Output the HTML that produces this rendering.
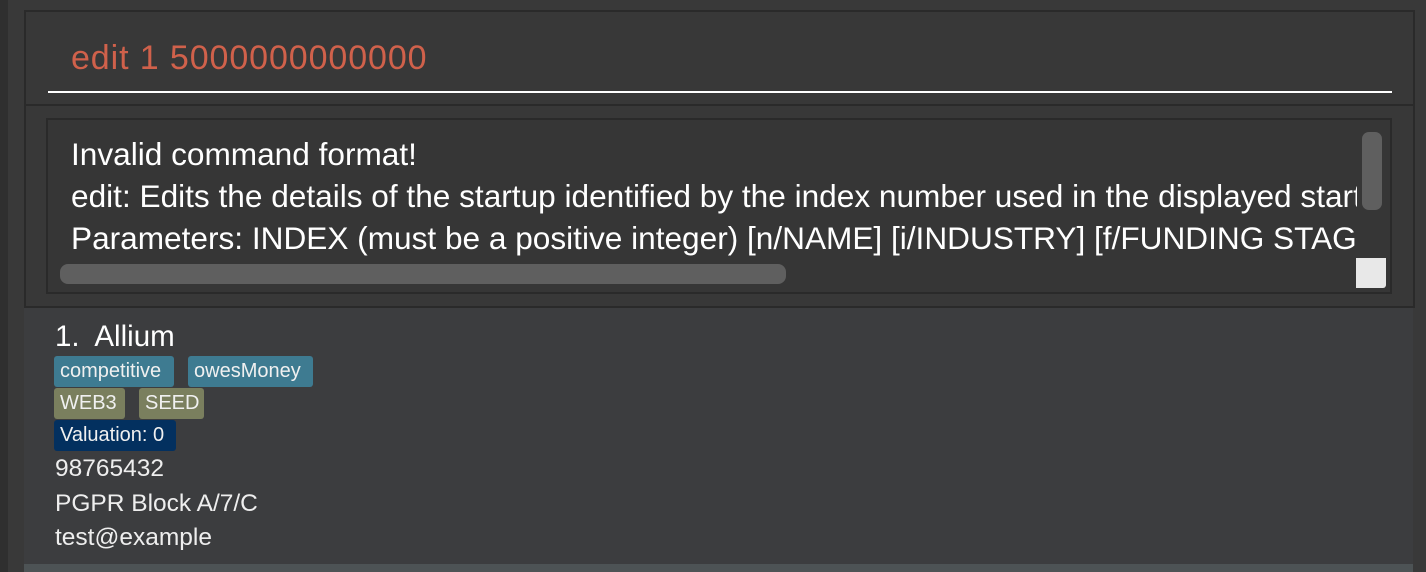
<!DOCTYPE html>
<html><head><style>
*{margin:0;padding:0;box-sizing:border-box}
body{width:1426px;height:572px;background:#393939;position:relative;overflow:hidden;font-family:"Liberation Sans",sans-serif}
.a{position:absolute}
.tag{position:absolute;height:31px;border-radius:3px;color:#f0f0f0;font-size:20px;line-height:31px;padding:0 6px;white-space:nowrap}
.t{position:absolute;color:#fff;font-size:31.6px;line-height:37px;white-space:nowrap;left:71px}
.d{position:absolute;color:#eee;font-size:24.5px;line-height:31px;left:55px;white-space:nowrap}
</style></head><body>
<div class="a" style="left:0;top:0;width:8px;height:572px;background:#2f2f2f"></div>
<div class="a" style="left:24px;top:10px;width:1391px;height:96px;background:#383838;border:2px solid #2a2a2a;border-bottom:none"></div>
<div class="a" style="left:71px;top:38px;color:#d0614b;font-size:34px;line-height:40px;white-space:nowrap;letter-spacing:0.9px">edit 1 5000000000000</div>
<div class="a" style="left:48px;top:91px;width:1344px;height:2px;background:#fff"></div>
<div class="a" style="left:24px;top:104px;width:1391px;height:204px;background:#383838;border:2px solid #2a2a2a"></div>
<div class="a" style="left:46px;top:118px;width:1346px;height:176px;background:#363636;border:2px solid #2a2a2a;overflow:hidden">
</div>
<div class="t" style="top:136px">Invalid command format!</div>
<div class="t" style="top:178px;width:1286px;overflow:hidden">edit: Edits the details of the startup identified by the index number used in the displayed startup list.</div>
<div class="t" style="top:220px;width:1286px;overflow:hidden">Parameters: INDEX (must be a positive integer) [n/NAME] [i/INDUSTRY] [f/FUNDING STAGE]</div>
<div class="a" style="left:60px;top:264px;width:726px;height:20px;border-radius:8px;background:#5f5f5f"></div>
<div class="a" style="left:1362px;top:132px;width:20px;height:78px;border-radius:7px;background:#5f5f5f"></div>
<div class="a" style="left:1356px;top:258px;width:30px;height:30px;border-radius:0 0 3px 0;background:#e8e8e8"></div>
<div class="a" style="left:24px;top:308px;width:1389px;height:264px;background:#3c3d3f"></div>
<div class="a" style="left:24px;top:564px;width:1389px;height:8px;background:#4d5355"></div>
<div class="a" style="left:55px;top:319px;color:#fff;font-size:29.5px;line-height:35px;white-space:nowrap">1.&nbsp; Allium</div>
<div class="tag" style="left:54px;top:356px;width:120px;background:#3e7b91">competitive</div>
<div class="tag" style="left:188px;top:356px;width:125px;background:#3e7b91">owesMoney</div>
<div class="tag" style="left:54px;top:388px;width:71px;background:#7a7f5e">WEB3</div>
<div class="tag" style="left:139px;top:388px;width:65px;background:#7a7f5e">SEED</div>
<div class="tag" style="left:54px;top:420px;width:122px;background:#03305f">Valuation: 0</div>
<div class="d" style="top:453px">98765432</div>
<div class="d" style="top:488px">PGPR Block A/7/C</div>
<div class="d" style="top:522px">test@example</div>
</body></html>
